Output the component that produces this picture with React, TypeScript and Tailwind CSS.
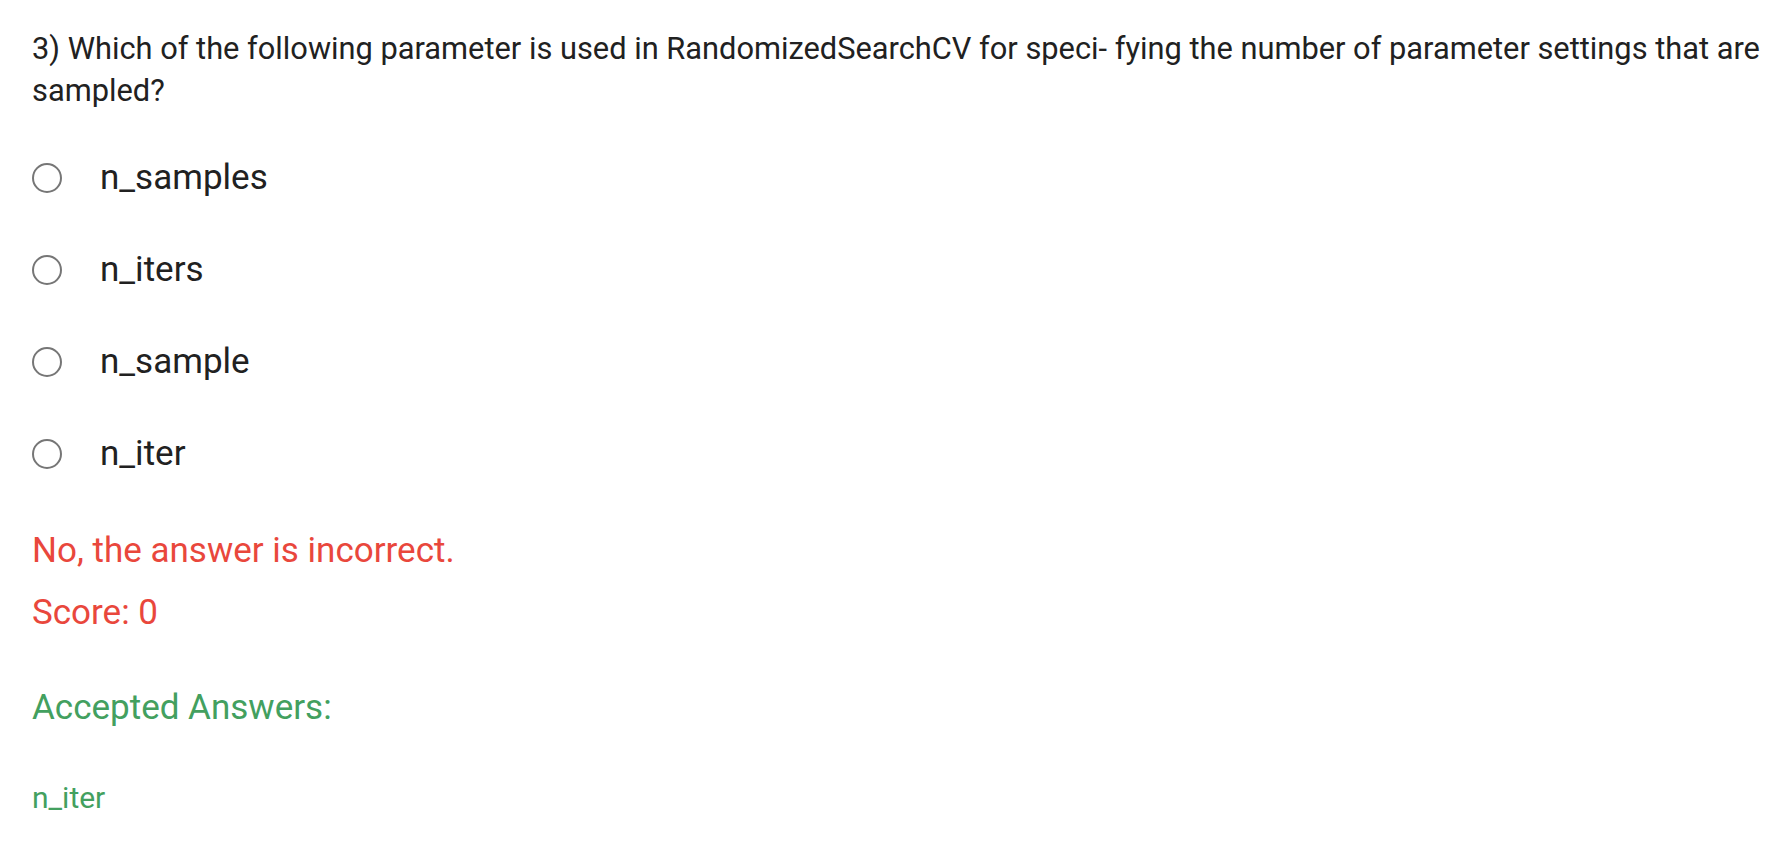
import React from 'react';

const options = ['n_samples', 'n_iters', 'n_sample', 'n_iter'];

const Radio = () => (
  <span className="block w-[30px] h-[30px] rounded-full border-[2.5px] border-[#767676] bg-white shrink-0" />
);

const App = () => {
  return (
    <div className="min-h-screen bg-white font-['Roboto',sans-serif] text-[#212121]">
      <div className="pl-[32px] pr-[20px] pt-[28px]">
        <p className="text-[30.8px] leading-[42px] w-[1740px]">
          3) Which of the following parameter is used in RandomizedSearchCV for speci- fying the number of parameter settings that are sampled?
        </p>

        <div className="mt-[20px] flex flex-col">
          {options.map((opt) => (
            <label key={opt} className="flex items-center h-[92px]">
              <Radio />
              <span className="ml-[38px] text-[35px] leading-[44px]">{opt}</span>
            </label>
          ))}
        </div>

        <div className="mt-[25px] text-[#e9473c] text-[35px] leading-[52px]">
          No, the answer is incorrect.
        </div>
        <div className="mt-[10px] text-[#e9473c] text-[35px] leading-[52px]">
          Score: 0
        </div>

        <div className="mt-[43px] text-[#43a05f] text-[35px] leading-[52px]">
          Accepted Answers:
        </div>
        <div className="mt-[44px] text-[#43a05f] text-[30px] leading-[40px]">
          n_iter
        </div>
      </div>
    </div>
  );
};

export default App;
